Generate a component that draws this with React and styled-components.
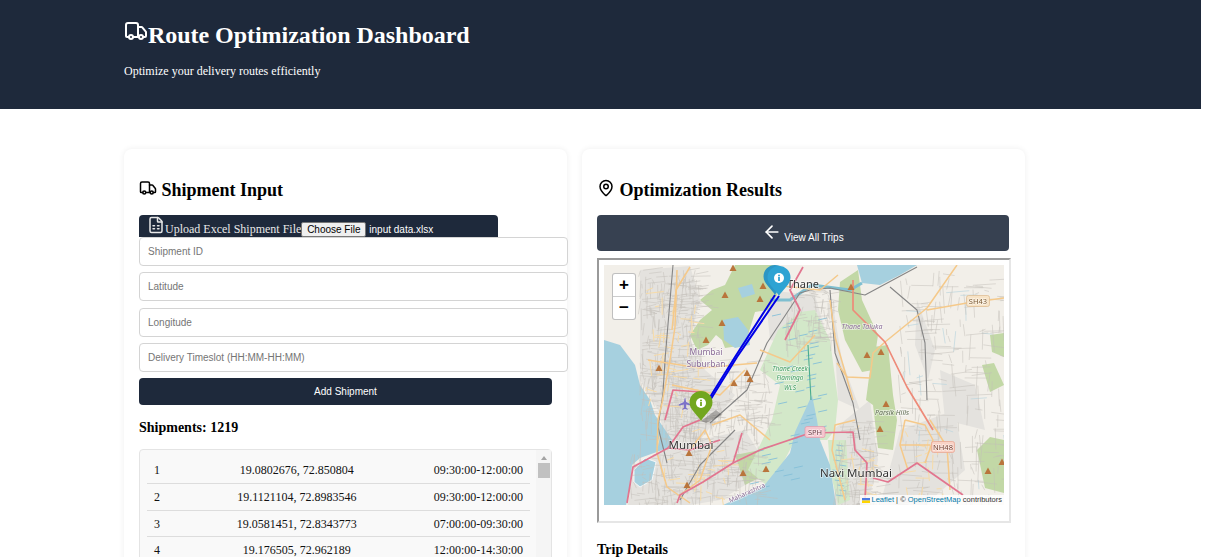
import React from "react";
import styled, { createGlobalStyle } from "styled-components";
import { Truck, FileSpreadsheet, MapPin, ArrowLeft } from "lucide-react";

const GlobalStyle = createGlobalStyle`
  html, body {
    margin: 0;
    height: 557px;
    overflow: hidden;
    background: #fff;
    font-family: "Liberation Serif", "Times New Roman", serif;
  }
  * { box-sizing: border-box; }
`;

const Page = styled.div`
  width: 1201px;
  height: 557px;
  overflow: hidden;
`;

const Header = styled.header`
  height: 109px;
  background: #1e293b;
  color: #fff;
  padding: 21px 0 0 124px;
`;

const HeaderTitle = styled.h1`
  display: flex;
  align-items: flex-start;
  margin: 0;
  height: 32px;
  font-size: 24px;
  line-height: 29px;
  font-weight: 700;
  letter-spacing: -0.04px;
  svg { flex: none; margin-top: -2px; }
`;

const HeaderSub = styled.p`
  margin: 11px 0 0;
  font-size: 12px;
  line-height: 14px;
`;

const Columns = styled.main`
  display: grid;
  grid-template-columns: 443px 443px;
  gap: 15px;
  margin: 40px 0 0 124px;
`;

const Card = styled.section`
  height: 560px;
  padding: 30px 15px 0;
  background: #fff;
  border-radius: 8px;
  box-shadow: 0 0 6px rgba(0, 0, 0, 0.07);
`;

const CardTitle = styled.h2`
  display: flex;
  align-items: flex-start;
  gap: 4.5px;
  margin: 0 0 14px;
  height: 22px;
  font-size: 18px;
  line-height: 22px;
  font-weight: 700;
  color: #000;
`;

const UploadBar = styled.div`
  display: flex;
  align-items: flex-end;
  width: 359px;
  height: 22px;
  padding-left: 8px;
  background: #1e293b;
  border-radius: 4px 4px 0 0;
  color: #e8e8e8;
  font-size: 12px;
  line-height: 14px;
  svg { flex: none; margin-bottom: 3px; }
`;

const UploadText = styled.span`
  padding-bottom: 1px;
`;

const ChooseButton = styled.button`
  width: 65px;
  height: 15px;
  margin: 0 3px 0 0;
  padding: 0;
  border: 1px solid #767676;
  border-radius: 2px;
  background: #efefef;
  color: #000;
  font: 10px/13px "Liberation Sans", Arial, sans-serif;
`;

const FileName = styled.span`
  padding-bottom: 1px;
  color: #fff;
  font: 10px/13px "Liberation Sans", Arial, sans-serif;
`;

const Fields = styled.div`
  display: flex;
  flex-direction: column;
  gap: 6.33px;
`;

const Field = styled.input`
  display: block;
  width: 429px;
  height: 29px;
  padding: 0 8px;
  border: 1px solid #d4d4d4;
  border-radius: 4px;
  background: #fff;
  font: 10px "Liberation Sans", Arial, sans-serif;
  &::placeholder { color: #757575; opacity: 1; }
`;

const AddButton = styled.button`
  display: block;
  width: 413px;
  height: 27px;
  margin-top: 6px;
  border: 0;
  border-radius: 4px;
  background: #1e293b;
  color: #fff;
  font: 10px "Liberation Sans", Arial, sans-serif;
`;

const CountHeading = styled.h3`
  margin: 15px 0 13px;
  font-size: 14px;
  line-height: 16px;
  font-weight: 700;
`;

const ListBox = styled.div`
  position: relative;
  width: 413px;
  height: 180px;
  padding: 7px 21px 0 7px;
  background: #f9f9f9;
  border: 1px solid #e4e4e4;
  border-radius: 4px;
`;

const ListRow = styled.div`
  display: flex;
  justify-content: space-between;
  height: 26.8px;
  padding: 0 7px;
  border-bottom: 1px solid #ddd;
  font-size: 12px;
  line-height: 26px;
  color: #111;
`;

const ScrollTrack = styled.div`
  position: absolute;
  top: 0;
  right: 0;
  bottom: 0;
  width: 15px;
  background: #f5f5f5;
`;

const ScrollArrow = styled.div`
  width: 0;
  margin: 6px auto 0;
  border: 3.5px solid transparent;
  border-top: 0;
  border-bottom: 4px solid #a3a3a3;
`;

const ScrollThumb = styled.div`
  width: 12px;
  height: 15px;
  margin: 3px auto 0;
  background: #c1c1c1;
`;

const BackButton = styled.button`
  display: flex;
  align-items: flex-start;
  justify-content: center;
  gap: 2px;
  width: 412px;
  height: 36px;
  padding: 7px 0 0;
  border: 0;
  border-radius: 4px;
  background: #374151;
  color: #fff;
  font: 10px/13px "Liberation Sans", Arial, sans-serif;
  span { margin-top: 9px; }
`;

const MapFrame = styled.div`
  width: 414px;
  height: 265px;
  margin-top: 7px;
  padding: 5px 5px 16px;
  border: 2px solid;
  border-color: #9a9a9a #e6e6e6 #e6e6e6 #9a9a9a;
  background: #fff;
`;

const MapPane = styled.div`
  position: relative;
  width: 400px;
  height: 240px;
  overflow: hidden;
  background: #f2efe9;
`;

const MapDrawing = styled.svg`
  display: block;
  filter: blur(0.35px);
`;

const ZoomBox = styled.div`
  position: absolute;
  top: 8px;
  left: 8px;
  width: 24px;
  border: 1px solid rgba(0, 0, 0, 0.25);
  border-radius: 3px;
  background: #fff;
`;

const ZoomButton = styled.div`
  height: 22.5px;
  border-bottom: ${(p) => (p.$last ? "0" : "1px solid #ccc")};
  color: #000;
  text-align: center;
  font: 700 17px/22px "Liberation Sans", Arial, sans-serif;
`;

const Attribution = styled.div`
  position: absolute;
  right: 0;
  bottom: 0;
  display: flex;
  align-items: center;
  gap: 2px;
  height: 10px;
  padding: 0 2px;
  background: rgba(255, 255, 255, 0.8);
  color: #333;
  font: 7.5px/10px "Liberation Sans", Arial, sans-serif;
  b { font-weight: 400; color: #0078a8; }
  svg { flex: none; }
`;

const TripHeading = styled.h3`
  margin: 19px 0 0;
  font-size: 14px;
  line-height: 16px;
  font-weight: 700;
`;

const MapText = styled.text`
  font-family: "Noto Sans", "Open Sans", sans-serif;
  font-size: ${(p) => p.$size || 10}px;
  font-style: ${(p) => (p.$italic ? "italic" : "normal")};
  fill: ${(p) => p.$color || "#333"};
  text-anchor: middle;
  paint-order: stroke;
  stroke: rgba(255, 255, 255, 0.6);
  stroke-width: 1.4px;
`;

const shipments = [
  ["1", "19.0802676, 72.850804", "09:30:00-12:00:00"],
  ["2", "19.1121104, 72.8983546", "09:30:00-12:00:00"],
  ["3", "19.0581451, 72.8343773", "07:00:00-09:30:00"],
  ["4", "19.176505, 72.962189", "12:00:00-14:30:00"],
];

const placeholders = ["Shipment ID", "Latitude", "Longitude", "Delivery Timeslot (HH:MM-HH:MM)"];

// small seeded generator for the faint street mesh of the tiles
const rnd = (() => {
  let s = 7;
  return () => {
    s = (s * 16807) % 2147483647;
    return s / 2147483647;
  };
})();

const mesh = (x0, y0, x1, y1, n, len = 18) => {
  let d = "";
  for (let i = 0; i < n; i++) {
    const x = x0 + rnd() * (x1 - x0);
    const y = y0 + rnd() * (y1 - y0);
    const a = rnd() > 0.5;
    const l = 4 + rnd() * len;
    d += a ? `M${x} ${y}l${l} ${rnd() * 6 - 3}` : `M${x} ${y}l${rnd() * 6 - 3} ${l}`;
  }
  return d;
};

const urban = [
  "M640 270L690 266L700 300L690 340L705 370L735 395L712 425L700 440L690 505L628 505L634 465L668 448L658 410L640 380Z",
  "M765 290L815 295L825 330L800 345L770 340Z",
  "M700 440L745 430L770 470L720 500L690 505Z",
  "M833 430L870 400L878 460L868 505L835 505Z",
  "M900 430L955 410L965 470L925 505L880 505Z",
  "M832 300L842 360L860 410L838 400Z",
  "M917 300L935 350L928 380L915 345Z",
  "M940 370L975 385L985 430L945 420Z",
];

const greens = [
  "M700 300L712 290L725 285L735 265L775 265L777 295L768 310L755 312L752 322L745 345L725 348L722 340L716 335L708 345L697 350L690 335L700 320L712 310Z",
  "M840 282L858 270L862 300L878 335L873 370L862 372L845 340L838 310Z",
  "M873 347L888 345L893 395L897 420L893 450L878 448L873 405L866 400Z",
  "M977 450L990 437L1004 440L1004 493L985 488Z",
  "M990 335L1004 333L1004 357L992 352Z",
  "M982 365L994 363L1004 385L990 392Z",
  "M735 455L760 450L775 470L745 485Z",
];

const flats = [
  "M778 330L800 312L815 310L830 340L838 400L835 430L827 440L795 440L770 488L748 470L772 420L780 385L760 370Z",
  "M828 440L846 440L850 500L838 505L830 470Z",
];

const waters = [
  "M604 340L620 345L635 365L640 385L650 400L655 415L672 440L668 448L640 458L632 465L630 490L626 505L604 505Z",
  "M795 432L812 395L817 420L820 440L830 465L836 505L723 505L763 487L790 453Z",
  "M857 265L917 265L900 275L880 285L862 283Z",
  "M723 320L738 317L748 330L750 345L735 348L724 340Z",
  "M738 288L752 284L755 294L742 298Z",
];

const bay = "M634 470L645 458L656 462L652 480L640 487L634 482Z";

const pinkRoads = [
  "M627 503L633 467L668 448L683 427L700 420",
  "M677 503L680 495L703 482L733 463L742 433",
  "M733 463L760 450L810 433L853 432L855 450L867 463L865 500",
  "M873 478L888 482L917 463L963 495",
  "M665 420L673 390L700 392L702 410",
  "M803 267L790 290L800 310L785 340",
  "M668 448L690 450L720 440",
];

const orangeRoads = [
  "M957 265L927 308L885 342L873 353L870 378L847 377L837 363",
  "M927 310L967 303L1004 298",
  "M830 300L835 337L853 400",
  "M677 270L675 327L670 360L662 403L658 420L657 453L667 487L690 503",
  "M648 360L700 368L757 363",
  "M690 267L676 290L672 330",
  "M672 385L720 395L745 370",
  "M690 450L705 430L712 445L700 480L680 495",
  "M930 420L947 447L950 490",
  "M905 420L900 445L908 470M905 420L925 425L933 440L925 463M900 445L930 445",
  "M855 420L835 425L832 450L845 500",
  "M760 350L790 362L815 335",
  "M773 285L820 290L838 275",
  "M770 440L740 415L712 425",
];

const rails = [
  "M673 265L665 360L663 393L658 427L667 463",
  "M710 423L747 390L767 343L800 293L810 290L830 288L865 295L917 267",
  "M890 287L917 310L925 343L927 400",
  "M830 290L835 353L853 403L860 440",
  "M680 500L700 465L735 430",
];

const peaks = [
  [733, 268], [725, 295], [763, 286], [760, 299], [722, 323], [706, 340], [659, 368],
  [747, 373], [750, 379], [734, 383], [851, 287], [867, 355], [881, 352], [886, 404],
  [880, 429], [689, 453], [687, 485], [743, 473], [766, 469], [988, 471], [1002, 462],
];

const creekMarks = (() => {
  let d = "";
  for (let y = 316; y < 490; y += 4) {
    const x = 772 + rnd() * 50 + (y > 440 ? -25 : 0);
    d += `M${x} ${y}l9 -2`;
  }
  for (let y = 445; y < 500; y += 5) {
    d += `M${832 + rnd() * 8} ${y}l7 1`;
  }
  return d;
})();

const streets = [
  mesh(640, 270, 700, 440, 420),
  mesh(690, 400, 760, 500, 170),
  mesh(630, 450, 700, 505, 110),
  mesh(700, 360, 770, 430, 80),
  mesh(785, 290, 835, 345, 90),
  mesh(835, 420, 880, 505, 130),
  mesh(895, 270, 1004, 505, 220, 26),
].join("");

const minorRoads = [
  mesh(645, 290, 700, 440, 46, 14),
  mesh(660, 450, 730, 505, 24, 12),
  mesh(840, 425, 875, 505, 20, 12),
  mesh(900, 430, 950, 500, 20, 12),
].join("");

const streams = mesh(900, 280, 1004, 500, 22, 20);

const Pin = ({ x, y, color }) => (
  <g transform={`translate(${x} ${y})`}>
    <path d="M0 0C-3-6-11.5-11-11.5-18.5A11.5 11.5 0 0 1 11.5-18.5C11.5-11 3-6 0 0Z" fill={color} />
    <circle cx="0" cy="-18" r="5" fill="#fff" />
    <rect x="-0.9" y="-19" width="1.8" height="4" fill={color} />
    <rect x="-0.9" y="-21.3" width="1.8" height="1.6" fill={color} />
  </g>
);

const Road = ({ d, color, width }) => (
  <path d={d} fill="none" stroke={color} strokeWidth={width} strokeLinejoin="round" />
);

const Shield = ({ x, y, w, label, bg, edge, color }) => (
  <g>
    <rect x={x - w / 2} y={y - 5.5} width={w} height={11} rx="2" fill={bg} stroke={edge} strokeWidth="0.7" />
    <MapText x={x} y={y + 2.8} $size={7.5} $color={color}>{label}</MapText>
  </g>
);

const RouteMap = () => (
  <MapPane>
    <MapDrawing width="400" height="240" viewBox="604 265 400 240">
      <rect x="604" y="265" width="400" height="240" fill="#f2efe9" />
      {urban.map((d) => <path key={d} d={d} fill="#e4e2de" />)}
      {greens.map((d) => <path key={d} d={d} fill="#c2d8a6" />)}
      {flats.map((d) => <path key={d} d={d} fill="#d3e8c9" />)}
      {waters.map((d) => <path key={d} d={d} fill="#a6d0df" />)}
      <path d={bay} fill="#a6d0df" stroke="#fff" strokeWidth="0.8" />
      <Road d="M770 300L790 300L812 285L850 290L862 283" color="#7fbfd0" width="3" />
      <Road d={streams} color="#bcd6de" width="0.7" />
      <Road d={creekMarks} color="#84c0d8" width="0.9" />
      <Road d={streets} color="#c2beb8" width="0.5" />
      <Road d={minorRoads} color="#f7dba8" width="1" />
      {rails.map((d) => <Road key={d} d={d} color="#858585" width="1.1" />)}
      {orangeRoads.map((d) => <Road key={d} d={d} color="#f5c98a" width="1.5" />)}
      {pinkRoads.map((d) => <Road key={d} d={d} color="#e2758f" width="1.7" />)}
      <Road d="M853 280L853 310L885 342L907 387L933 430" color="#ee8a78" width="1.7" />
      <Road d="M808 345L811 400" color="#4bab8f" width="1.1" />
      {peaks.map(([x, y]) => (
        <path key={`${x}-${y}`} d={`M${x} ${y - 3.5}l3.5 6.5h-7z`} fill="#b9753c" />
      ))}
      <path d="M685 397l1.2 5 5 2.5v1.2l-5-1.3v3.4l1.6 1.2v.8l-2.8-.7-2.8.7v-.8l1.6-1.2v-3.4l-5 1.3v-1.2l5-2.5z" fill="#7c72c9" />
      <Shield x={978} y={301} w={23} label="SH43" bg="#f7e3c6" edge="#dcb98d" color="#7b5a33" />
      <Shield x={815} y={432} w={20} label="SPH" bg="#f6c6cf" edge="#e39aaa" color="#6d3a45" />
      <Shield x={943} y={447} w={23} label="NH48" bg="#f9d2c6" edge="#e8a28e" color="#6f3a2b" />
      <MapText x={803} y={288} $size={11}>Thane</MapText>
      <MapText x={691} y={449} $size={11.5}>Mumbai</MapText>
      <MapText x={856} y={477} $size={11.5}>Navi Mumbai</MapText>
      <MapText x={706} y={355} $size={8.5} $color="#8b6d98">Mumbai</MapText>
      <MapText x={706} y={367} $size={8.5} $color="#8b6d98">Suburban</MapText>
      <MapText x={862} y={329} $size={7} $italic $color="#8b6d98">Thane Taluka</MapText>
      <MapText x={892} y={415} $size={7} $italic $color="#5e6b52">Parsik Hills</MapText>
      <MapText x={790} y={371} $size={6.5} $italic $color="#3d9b5f">Thane Creek</MapText>
      <MapText x={790} y={380} $size={6.5} $italic $color="#3d9b5f">Flamingo</MapText>
      <MapText x={790} y={390} $size={6.5} $italic $color="#3d9b5f">WLS</MapText>
      <MapText x={747} y={495} $size={6.5} $color="#8b6d98" transform="rotate(-24 747 493)">Maharashtra</MapText>
      <path d="M701 421L716 410L722 415L706 423Z" fill="rgba(0,0,0,0.25)" />
      <Road d="M779 296L737 357L704 410" color="#0000e6" width="2" />
      <Road d="M775 295L735 357L702 410" color="#0000e6" width="2" />
      <Pin x={775} y={295} color="#2c96c4" />
      <Pin x={779} y={296} color="#2ea3d3" />
      <Pin x={701} y={421} color="#72a61e" />
    </MapDrawing>
    <ZoomBox>
      <ZoomButton>+</ZoomButton>
      <ZoomButton $last>−</ZoomButton>
    </ZoomBox>
    <Attribution>
      <svg width="8" height="5" viewBox="0 0 8 5">
        <rect width="8" height="2.5" fill="#4c7be1" />
        <rect y="2.5" width="8" height="2.5" fill="#ffd500" />
      </svg>
      <span><b>Leaflet</b> | © <b>OpenStreetMap</b> contributors</span>
    </Attribution>
  </MapPane>
);

export default function App() {
  return (
    <Page>
      <GlobalStyle />
      <Header>
        <HeaderTitle>
          <Truck size={24} strokeWidth={2} />
          Route Optimization Dashboard
        </HeaderTitle>
        <HeaderSub>Optimize your delivery routes efficiently</HeaderSub>
      </Header>
      <Columns>
        <Card>
          <CardTitle>
            <Truck size={18} strokeWidth={2} />
            Shipment Input
          </CardTitle>
          <UploadBar>
            <FileSpreadsheet size={18} strokeWidth={2} />
            <UploadText>Upload Excel Shipment File</UploadText>
            <ChooseButton type="button">Choose File</ChooseButton>
            <FileName>input data.xlsx</FileName>
          </UploadBar>
          <Fields>
            {placeholders.map((p) => (
              <Field key={p} placeholder={p} readOnly />
            ))}
          </Fields>
          <AddButton type="button">Add Shipment</AddButton>
          <CountHeading>Shipments: 1219</CountHeading>
          <ListBox>
            {shipments.map(([id, coords, slot]) => (
              <ListRow key={id}>
                <span>{id}</span>
                <span>{coords}</span>
                <span>{slot}</span>
              </ListRow>
            ))}
            <ScrollTrack>
              <ScrollArrow />
              <ScrollThumb />
            </ScrollTrack>
          </ListBox>
        </Card>
        <Card>
          <CardTitle>
            <MapPin size={18} strokeWidth={2} />
            Optimization Results
          </CardTitle>
          <BackButton type="button">
            <ArrowLeft size={20} strokeWidth={2} />
            <span>View All Trips</span>
          </BackButton>
          <MapFrame>
            <RouteMap />
          </MapFrame>
          <TripHeading>Trip Details</TripHeading>
        </Card>
      </Columns>
    </Page>
  );
}
